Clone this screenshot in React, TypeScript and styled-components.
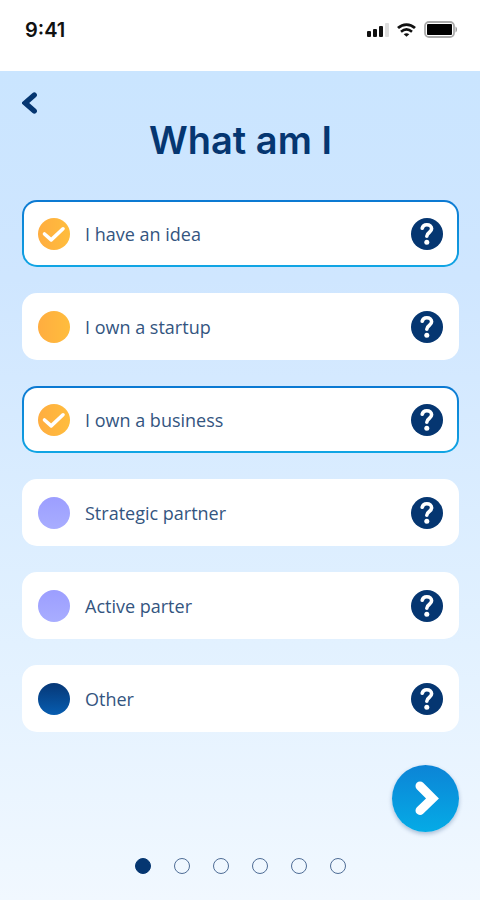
import React, { useState } from "react";
import styled, { createGlobalStyle } from "styled-components";

const NAVY = "#053671";

const GlobalStyle = createGlobalStyle`
  *, *::before, *::after { box-sizing: border-box; }
  body {
    margin: 0;
    background: #f1f8ff;
    color: ${NAVY};
    font-family: "Open Sans", "Noto Sans", sans-serif;
  }
  button { font: inherit; color: inherit; border: 0; padding: 0; background: none; cursor: pointer; }
`;

const Screen = styled.div`
  min-height: 100vh;
  display: flex;
  flex-direction: column;
`;

const StatusBar = styled.header`
  height: 71px;
  padding: 0 22px 12px 25px;
  display: flex;
  align-items: center;
  justify-content: space-between;
  background: #fff;
  color: #111;
`;

const Time = styled.time`
  font: 600 20px/24px Inter, sans-serif;
`;

const StatusIcons = styled.div`
  display: flex;
  align-items: center;
  gap: 8px;
`;

const Content = styled.main`
  flex: 1;
  display: flex;
  flex-direction: column;
  padding: 20px 21px 24px 22px;
  background: linear-gradient(180deg, #cae5ff 0%, #cfe6ff 25%, #e0f0ff 65%, #f1f8ff 100%);
`;

const BackButton = styled.button`
  align-self: flex-start;
  height: 24px;
  display: flex;
  align-items: center;
`;

const Title = styled.h1`
  margin: 4px 0 39px;
  text-align: center;
  font: 600 38px/42px Inter, sans-serif;
`;

const OptionList = styled.ul`
  list-style: none;
  margin: 0;
  padding: 0;
  display: grid;
  gap: 26px;
`;

const Option = styled.li<{ $selected: boolean }>`
  height: 67px;
  display: flex;
  align-items: center;
  padding-right: 14px;
  border: 2px solid transparent;
  border-radius: 15px;
  background: ${(p) =>
    p.$selected
      ? "linear-gradient(#fff, #fff) padding-box, linear-gradient(180deg, #0c79d2, #10a5e4) border-box"
      : "#fff border-box"};
`;

const OptionLabel = styled.label`
  flex: 1;
  align-self: stretch;
  display: flex;
  align-items: center;
  gap: 15px;
  padding-left: 14px;
  font-size: 18px;
  line-height: 24px;
  color: #34557f;
  cursor: pointer;
`;

const CheckSlot = styled.span`
  display: grid;
  place-items: center;

  > * { grid-area: 1 / 1; }
  > svg { pointer-events: none; }
`;

const Check = styled.input<{ $fill: string }>`
  appearance: none;
  width: 32px;
  height: 32px;
  margin: 0;
  border-radius: 50%;
  background: ${(p) => p.$fill};
  cursor: pointer;
`;

const HelpButton = styled.button`
  width: 32px;
  height: 32px;
  display: grid;
  place-items: center;
  border-radius: 50%;
  background: ${NAVY};
`;

const NextButton = styled.button`
  align-self: flex-end;
  width: 67px;
  height: 67px;
  margin-top: 33px;
  display: grid;
  place-items: center;
  border-radius: 50%;
  background: linear-gradient(180deg, #0c84d6, #05abe6);
  box-shadow: 0 2px 4px rgba(5, 54, 113, 0.3);
`;

const Pager = styled.nav`
  display: flex;
  justify-content: center;
  gap: 23px;
  margin-top: 26px;
`;

const Dot = styled.button<{ $active: boolean }>`
  && {
    width: 16px;
    height: 16px;
    border: 1px solid ${(p) => (p.$active ? NAVY : "#4f6d96")};
    border-radius: 50%;
    background: ${(p) => (p.$active ? NAVY : "transparent")};
  }
`;

const ORANGE = "linear-gradient(90deg, #ffad40, #ffbd3d)";
const LILAC = "linear-gradient(180deg, #9c9eff, #a8adff)";
const DEEP = "linear-gradient(180deg, #063776, #075db0)";

const OPTIONS = [
  { text: "I have an idea", fill: ORANGE, selected: true },
  { text: "I own a startup", fill: ORANGE, selected: false },
  { text: "I own a business", fill: ORANGE, selected: true },
  { text: "Strategic partner", fill: LILAC, selected: false },
  { text: "Active parter", fill: LILAC, selected: false },
  { text: "Other", fill: DEEP, selected: false },
];

const SignalIcon = () => (
  <svg width="22" height="14" viewBox="0 0 22 14" aria-hidden="true">
    <rect x="0" y="8" width="4" height="6" rx="1" fill="#111" />
    <rect x="6" y="6" width="4" height="8" rx="1" fill="#111" />
    <rect x="12" y="3" width="4" height="11" rx="1" fill="#111" />
    <rect x="18" y="0" width="4" height="14" rx="1" fill="#ddd" />
  </svg>
);

const WifiIcon = () => (
  <svg width="19" height="14" viewBox="0 0 19 14" fill="none" stroke="#111" aria-hidden="true">
    <path d="M1 5C6 .4 13 .4 18 5" strokeWidth="2.8" />
    <path d="M4 8.8C7.4 5.8 11.6 5.8 15 8.8" strokeWidth="2.5" />
    <path d="M9.5 13.8 6.7 11.2C8.4 9.8 10.6 9.8 12.3 11.2Z" fill="#111" stroke="none" />
  </svg>
);

const BatteryIcon = () => (
  <svg width="34" height="17" viewBox="0 0 34 17" aria-hidden="true">
    <rect x="1" y="1" width="29" height="15" rx="4" fill="none" stroke="#aaa" strokeWidth="1.8" />
    <rect x="3" y="3" width="25" height="11" rx="1" fill="#000" />
    <path d="M31.5 5.5c2 .8 2 5.2 0 6Z" fill="#999" />
  </svg>
);

const CheckIcon = () => (
  <svg width="32" height="32" viewBox="0 0 32 32" fill="none" aria-hidden="true">
    <path d="M6.5 16 13.2 21.9 25 10.8" stroke="#fff" strokeWidth="3.6" strokeLinecap="round" strokeLinejoin="round" />
  </svg>
);

const HelpIcon = () => (
  <svg width="32" height="32" viewBox="0 0 32 32" fill="none" aria-hidden="true">
    <path d="M11.2 10.2C11.8 7.8 13.5 6.8 15.8 6.8c2.8 0 4.8 1.5 4.8 4 0 3.8-4.8 3.6-4.8 7.4" stroke="#fff" strokeWidth="3.6" strokeLinecap="round" strokeLinejoin="round" />
    <circle cx="15.8" cy="24.2" r="2.5" fill="#fff" />
  </svg>
);

export default function App() {
  const [selected, setSelected] = useState(OPTIONS.map((o) => o.selected));
  const [page, setPage] = useState(0);
  const toggle = (index: number) =>
    setSelected((prev) => prev.map((value, i) => (i === index ? !value : value)));

  return (
    <>
      <GlobalStyle />
      <Screen>
        <StatusBar>
          <Time>9:41</Time>
          <StatusIcons>
            <SignalIcon />
            <WifiIcon />
            <BatteryIcon />
          </StatusIcons>
        </StatusBar>
        <Content>
          <BackButton type="button" aria-label="Back">
            <svg width="16" height="24" viewBox="0 0 16 24" fill="none" aria-hidden="true">
              <path d="M12.3 4 3.2 12 12.3 20" stroke={NAVY} strokeWidth="5.2" strokeLinecap="round" strokeLinejoin="miter" />
            </svg>
          </BackButton>
          <Title>What am I</Title>
          <OptionList>
            {OPTIONS.map((option, i) => (
              <Option key={option.text} $selected={selected[i]}>
                <OptionLabel>
                  <CheckSlot>
                    <Check type="checkbox" $fill={option.fill} checked={selected[i]} onChange={() => toggle(i)} />
                    {selected[i] && <CheckIcon />}
                  </CheckSlot>
                  {option.text}
                </OptionLabel>
                <HelpButton type="button" aria-label={`About: ${option.text}`}>
                  <HelpIcon />
                </HelpButton>
              </Option>
            ))}
          </OptionList>
          <NextButton type="button" aria-label="Next">
            <svg width="67" height="67" viewBox="0 0 67 67" fill="none" aria-hidden="true">
              <path d="M28 21 40.5 33.5 28 45.5" stroke="#fff" strokeWidth="9" strokeLinecap="round" strokeLinejoin="miter" />
            </svg>
          </NextButton>
          <Pager aria-label="Steps">
            {OPTIONS.map((option, i) => (
              <Dot
                key={option.text}
                type="button"
                $active={i === page}
                aria-label={`Step ${i + 1}`}
                aria-current={i === page ? "step" : undefined}
                onClick={() => setPage(i)}
              />
            ))}
          </Pager>
        </Content>
      </Screen>
    </>
  );
}
